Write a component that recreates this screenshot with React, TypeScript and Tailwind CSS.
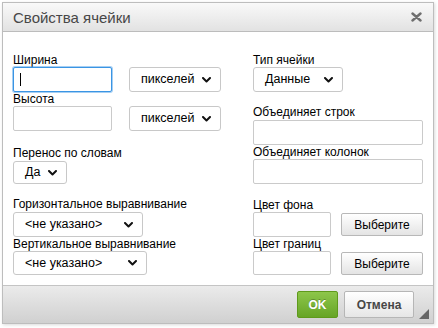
import React from "react";

function Label({ text, className = "" }: { text: string; className?: string }) {
  return (
    <div className={`h-[14px] leading-[14px] text-[12px] text-black whitespace-nowrap ${className}`}>
      {text}
    </div>
  );
}

function Field({ className = "", focused = false }: { className?: string; focused?: boolean }) {
  if (focused) {
    return (
      <div className={`bg-white border border-[#3a95e4] shadow-[0_0_0_1px_rgba(58,149,228,0.45)] rounded-[2px] flex items-center pl-[6px] ${className}`}>
        <div className="w-px h-[13px] bg-black" />
      </div>
    );
  }
  return <div className={`bg-white border border-[#cacaca] rounded-[2px] ${className}`} />;
}

function Chevron() {
  return (
    <svg width="9" height="6" viewBox="0 0 9 6" className="shrink-0">
      <path d="M1 1 L4.5 4.5 L8 1" fill="none" stroke="#111" strokeWidth="2" strokeLinecap="round" strokeLinejoin="round" />
    </svg>
  );
}

function Select({ value, className = "" }: { value: string; className?: string }) {
  return (
    <div className={`bg-white border border-[#c8c8c8] rounded-[3px] flex items-center justify-between pl-[11px] pr-[9px] text-[12.5px] text-black ${className}`}>
      <span className="whitespace-nowrap">{value}</span>
      <Chevron />
    </div>
  );
}

function PickButton() {
  return (
    <div className="ml-[10px] mt-[1px] w-[82px] h-[23px] border border-[#b8b8b8] rounded-[2px] bg-gradient-to-b from-white to-[#e4e4e4] flex items-center justify-center text-[12px] text-black">
      Выберите
    </div>
  );
}

export default function App() {
  return (
    <div className="w-[438px] h-[328px] bg-white overflow-hidden font-['Liberation_Sans',Arial,sans-serif]">
      <div className="ml-[2px] mt-[2px] w-[432px] h-[322px] border border-[#bdbdbd] shadow-[1px_1px_3px_rgba(0,0,0,0.15)] flex flex-col">
        {/* title */}
        <div className="h-[29px] shrink-0 border-b border-[#bcbcbc] bg-gradient-to-b from-[#f9f9f9] to-[#e2e2e2] flex items-center justify-between pl-[10px] pr-[11px]">
          <span className="text-[15px] leading-[17px] text-[#474747]">Свойства ячейки</span>
          <svg width="11" height="10" viewBox="0 0 11 10">
            <path d="M1.5 1.5 L9.5 8.5 M9.5 1.5 L1.5 8.5" stroke="#6f6f6f" strokeWidth="2.4" strokeLinecap="round" />
          </svg>
        </div>

        {/* body */}
        <div className="flex-1 bg-white flex pl-[10px] pt-[21px]">
          <div className="w-[240px] flex flex-col">
            <Label text="Ширина" />
            <div className="flex">
              <Field focused className="w-[99px] h-[25px]" />
              <Select value="пикселей" className="ml-[17px] w-[92px] h-[25px]" />
            </div>
            <Label text="Высота" />
            <div className="flex">
              <Field className="w-[99px] h-[25px]" />
              <Select value="пикселей" className="ml-[17px] w-[92px] h-[25px]" />
            </div>
            <Label text="Перенос по словам" className="mt-[15px]" />
            <Select value="Да" className="mt-[1px] w-[54px] h-[23px]" />
            <Label text="Горизонтальное выравнивание" className="mt-[13px]" />
            <Select value="<не указано>" className="mt-[1px] w-[130px] h-[25px]" />
            <Label text="Вертикальное выравнивание" />
            <Select value="<не указано>" className="w-[134px] h-[24px]" />
          </div>

          <div className="w-[170px] flex flex-col">
            <Label text="Тип ячейки" />
            <Select value="Данные" className="w-[90px] h-[25px] pl-[10px]" />
            <Label text="Объединяет строк" className="mt-[13px]" />
            <Field className="mt-[1px] w-[170px] h-[25px]" />
            <Label text="Объединяет колонок" />
            <Field className="w-[170px] h-[25px]" />
            <Label text="Цвет фона" className="mt-[14px]" />
            <div className="flex items-start">
              <Field className="w-[78px] h-[25px]" />
              <PickButton />
            </div>
            <Label text="Цвет границ" />
            <div className="flex items-start">
              <Field className="w-[78px] h-[24px]" />
              <PickButton />
            </div>
          </div>
        </div>

        {/* footer */}
        <div className="h-[38px] shrink-0 border-t border-[#c4c4c4] bg-gradient-to-b from-[#ebebeb] to-[#d0d0d0] flex items-start justify-end pr-[19px] pt-[5px] relative">
          <div className="w-[41px] h-[27px] rounded-[2px] border border-[#5f9a1c] bg-gradient-to-b from-[#8dc64a] to-[#67a526] flex items-center justify-center text-[12px] font-bold text-white [text-shadow:0_-1px_0_rgba(0,0,0,0.25)]">
            OK
          </div>
          <div className="ml-[6px] w-[70px] h-[27px] rounded-[2px] border border-[#b6b6b6] bg-gradient-to-b from-white to-[#e6e6e6] flex items-center justify-center text-[12px] font-bold text-[#474747]">
            Отмена
          </div>
          <svg width="10" height="10" viewBox="0 0 10 10" className="absolute right-[4px] bottom-[4px]">
            <polygon points="10,0 10,10 0,10" fill="#666" />
          </svg>
        </div>
      </div>
    </div>
  );
}
